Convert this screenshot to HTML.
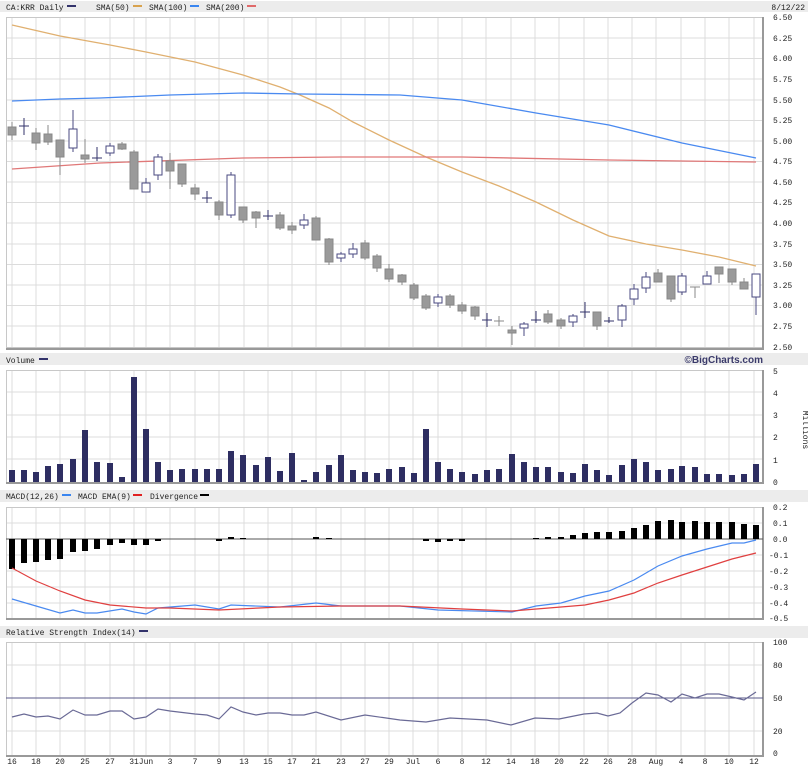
<!DOCTYPE html><html><head><meta charset="utf-8"><style>
body{margin:0;background:#fff;}
svg{display:block;font-family:"Liberation Mono","DejaVu Sans Mono",monospace;font-size:8px;fill:#222;}
</style></head><body>
<svg width="808" height="767" viewBox="0 0 808 767" xmlns="http://www.w3.org/2000/svg">
<rect x="0" y="1" width="808" height="11" fill="#ececec"/>
<text x="6" y="10">CA:KRR Daily</text><rect x="67" y="5" width="9" height="2" fill="#33336b"/>
<text x="96" y="10">SMA(50)</text><rect x="133" y="5" width="9" height="2" fill="#d8a24e"/>
<text x="149" y="10">SMA(100)</text><rect x="190" y="5" width="9" height="2" fill="#3a86f0"/>
<text x="206" y="10">SMA(200)</text><rect x="247" y="5" width="9" height="2" fill="#e06a6a"/>
<text x="805" y="10" text-anchor="end">8/12/22</text>

<rect x="0" y="353" width="808" height="12" fill="#ececec"/>
<text x="6" y="363">Volume</text><rect x="39" y="358" width="9" height="2" fill="#33336b"/>
<text x="763" y="363" text-anchor="end" font-family="Liberation Sans,sans-serif" font-weight="bold" font-size="10" fill="#3a3a6a">©BigCharts.com</text>

<rect x="0" y="490" width="808" height="12" fill="#ececec"/>
<text x="6" y="499">MACD(12,26)</text><rect x="62" y="494" width="9" height="2" fill="#3a86f0"/>
<text x="78" y="499">MACD EMA(9)</text><rect x="133" y="494" width="9" height="2" fill="#e02020"/>
<text x="150" y="499">Divergence</text><rect x="200" y="494" width="9" height="2" fill="#000"/>

<rect x="0" y="626" width="808" height="12" fill="#ececec"/>
<text x="6" y="635">Relative Strength Index(14)</text><rect x="139" y="630" width="9" height="2" fill="#33336b"/>

<g stroke="#dcdcdc" stroke-width="1" fill="none">
<path d="M12 17V348M36 17V348M60 17V348M85 17V348M110 17V348M134 17V348M146 17V348M170 17V348M195 17V348M219 17V348M244 17V348M268 17V348M292 17V348M316 17V348M341 17V348M365 17V348M389 17V348M413 17V348M438 17V348M462 17V348M486 17V348M511 17V348M535 17V348M559 17V348M584 17V348M608 17V348M632 17V348M656 17V348M681 17V348M705 17V348M729 17V348M754 17V348"/>
<path d="M12 370V482M36 370V482M60 370V482M85 370V482M110 370V482M134 370V482M146 370V482M170 370V482M195 370V482M219 370V482M244 370V482M268 370V482M292 370V482M316 370V482M341 370V482M365 370V482M389 370V482M413 370V482M438 370V482M462 370V482M486 370V482M511 370V482M535 370V482M559 370V482M584 370V482M608 370V482M632 370V482M656 370V482M681 370V482M705 370V482M729 370V482M754 370V482"/>
<path d="M12 507V618M36 507V618M60 507V618M85 507V618M110 507V618M134 507V618M146 507V618M170 507V618M195 507V618M219 507V618M244 507V618M268 507V618M292 507V618M316 507V618M341 507V618M365 507V618M389 507V618M413 507V618M438 507V618M462 507V618M486 507V618M511 507V618M535 507V618M559 507V618M584 507V618M608 507V618M632 507V618M656 507V618M681 507V618M705 507V618M729 507V618M754 507V618"/>
<path d="M12 642V755M36 642V755M60 642V755M85 642V755M110 642V755M134 642V755M146 642V755M170 642V755M195 642V755M219 642V755M244 642V755M268 642V755M292 642V755M316 642V755M341 642V755M365 642V755M389 642V755M413 642V755M438 642V755M462 642V755M486 642V755M511 642V755M535 642V755M559 642V755M584 642V755M608 642V755M632 642V755M656 642V755M681 642V755M705 642V755M729 642V755M754 642V755"/>
<path d="M6 38H763M6 58.5H763M6 79H763M6 100H763M6 120.5H763M6 141H763M6 161.5H763M6 182H763M6 202.5H763M6 223H763M6 244H763M6 264.5H763M6 285H763M6 305.5H763M6 326H763"/>
<path d="M6 392H763M6 415H763M6 437H763M6 459H763"/>
<path d="M6 523H763M6 555H763M6 571H763M6 587H763M6 603H763"/>
<path d="M6 665H763M6 731H763"/>
</g>
<g fill="none" stroke="#c8c8c8"><rect x="6.5" y="17.5" width="756" height="330"/><rect x="6.5" y="370.5" width="756" height="112"/><rect x="6.5" y="507.5" width="756" height="111"/><rect x="6.5" y="642.5" width="756" height="113"/></g>
<g stroke="#999" stroke-width="2" fill="none"><path d="M763 17V349H6M763 370V483H6M763 507V619H6M763 642V756H6"/></g>

<g><text x="773" y="20">6.50</text><text x="773" y="41">6.25</text><text x="773" y="61">6.00</text><text x="773" y="82">5.75</text><text x="773" y="103">5.50</text><text x="773" y="123">5.25</text><text x="773" y="144">5.00</text><text x="773" y="164">4.75</text><text x="773" y="185">4.50</text><text x="773" y="205">4.25</text><text x="773" y="226">4.00</text><text x="773" y="247">3.75</text><text x="773" y="267">3.50</text><text x="773" y="288">3.25</text><text x="773" y="308">3.00</text><text x="773" y="329">2.75</text><text x="773" y="350">2.50</text>
<text x="773" y="374">5</text><text x="773" y="396">4</text><text x="773" y="418">3</text><text x="773" y="440">2</text><text x="773" y="463">1</text><text x="773" y="485">0</text>
<text transform="translate(803,430) rotate(90)" text-anchor="middle">Millions</text>
<text x="773" y="510">0.2</text><text x="773" y="526">0.1</text><text x="773" y="542">0.0</text><text x="769" y="558">-0.1</text><text x="769" y="574">-0.2</text><text x="769" y="590">-0.3</text><text x="769" y="606">-0.4</text><text x="769" y="621">-0.5</text>
<text x="773" y="645">100</text><text x="773" y="668">80</text><text x="773" y="701">50</text><text x="773" y="734">20</text><text x="773" y="756">0</text>
</g>
<g text-anchor="middle"><text x="12" y="764">16</text><text x="36" y="764">18</text><text x="60" y="764">20</text><text x="85" y="764">25</text><text x="110" y="764">27</text><text x="134" y="764">31</text><text x="146" y="764">Jun</text><text x="170" y="764">3</text><text x="195" y="764">7</text><text x="219" y="764">9</text><text x="244" y="764">13</text><text x="268" y="764">15</text><text x="292" y="764">17</text><text x="316" y="764">21</text><text x="341" y="764">23</text><text x="365" y="764">27</text><text x="389" y="764">29</text><text x="413" y="764">Jul</text><text x="438" y="764">6</text><text x="462" y="764">8</text><text x="486" y="764">12</text><text x="511" y="764">14</text><text x="535" y="764">18</text><text x="559" y="764">20</text><text x="584" y="764">22</text><text x="608" y="764">26</text><text x="632" y="764">28</text><text x="656" y="764">Aug</text><text x="681" y="764">4</text><text x="705" y="764">8</text><text x="729" y="764">10</text><text x="754" y="764">12</text></g>

<g fill="none" stroke-width="1.3">
<polyline stroke="#e0b070" points="12,25 60,36 110,45 146,52 195,62 243,75 280,87 300,95 329,108 353,122 389,140 426,157 462,172 499,186 536,202 573,220 609,236 646,244 682,250 719,257 756,266"/>
<polyline stroke="#4a8af0" points="12,101 60,99 100,98 170,95 243,93 300,94 400,95 462,100 536,113 609,125 682,143 756,158"/>
<polyline stroke="#e07878" points="12,169 100,163 243,158 340,157 462,157 609,160 756,162"/>
</g>

<g stroke="#888" fill="#9a9a9a">
<path d="M12 122V140M36 128V150M48 125V145M60 140V175M85 139V163M122 142V150M134 150V189M170 153V189M182 164V187M195 184V200M219 200V220M243 207V223M256 211V228M280 212V230M292 222V234M316 216V240M329 238V265M365 240V260M377 254V272M389 264V282M402 274V285M414 283V300M426 294V310M450 294V308M462 302V314M475 306V320M512 326V345M548 310V324M561 318V329M597 312V330M658 269V282M671 276V302M719 267V283M732 269V285M744 278V289"/>
<rect x="8" y="127" width="8" height="8"/><rect x="32" y="133" width="8" height="10"/><rect x="44" y="134" width="8" height="8"/><rect x="56" y="140" width="8" height="17"/><rect x="81" y="155" width="8" height="4"/><rect x="118" y="144" width="8" height="5"/><rect x="130" y="152" width="8" height="37"/><rect x="166" y="161" width="8" height="10"/><rect x="178" y="164" width="8" height="20"/><rect x="191" y="188" width="8" height="6"/><rect x="215" y="202" width="8" height="13"/><rect x="239" y="207" width="8" height="13"/><rect x="252" y="212" width="8" height="6"/><rect x="276" y="215" width="8" height="13"/><rect x="288" y="226" width="8" height="4"/><rect x="312" y="218" width="8" height="22"/><rect x="325" y="239" width="8" height="23"/><rect x="361" y="243" width="8" height="15"/><rect x="373" y="256" width="8" height="12"/><rect x="385" y="269" width="8" height="10"/><rect x="398" y="275" width="8" height="7"/><rect x="410" y="285" width="8" height="13"/><rect x="422" y="296" width="8" height="12"/><rect x="446" y="296" width="8" height="9"/><rect x="458" y="305" width="8" height="6"/><rect x="471" y="307" width="8" height="9"/><rect x="508" y="330" width="8" height="3"/><rect x="544" y="314" width="8" height="8"/><rect x="557" y="320" width="8" height="6"/><rect x="593" y="312" width="8" height="14"/><rect x="654" y="273" width="8" height="9"/><rect x="667" y="276" width="8" height="23"/><rect x="715" y="267" width="8" height="7"/><rect x="728" y="269" width="8" height="13"/><rect x="740" y="282" width="8" height="7"/>
</g>
<g stroke="#4a4a80" fill="#fff">
<path d="M73 110V152M110 143V156M146 178V192M158 154V180M231 172V218M304 214V229M341 252V262M353 243V258M438 294V307M524 322V336M573 314V327M622 304V327M634 284V305M646 272V293M682 273V295M707 271V284M756 274V315"/>
<rect x="69" y="129" width="8" height="19"/><rect x="106" y="146" width="8" height="7"/><rect x="142" y="183" width="8" height="9"/><rect x="154" y="157" width="8" height="18"/><rect x="227" y="175" width="8" height="40"/><rect x="300" y="220" width="8" height="5"/><rect x="337" y="254" width="8" height="4"/><rect x="349" y="249" width="8" height="5"/><rect x="434" y="297" width="8" height="6"/><rect x="520" y="324" width="8" height="4"/><rect x="569" y="316" width="8" height="6"/><rect x="618" y="306" width="8" height="14"/><rect x="630" y="289" width="8" height="10"/><rect x="642" y="277" width="8" height="11"/><rect x="678" y="276" width="8" height="16"/><rect x="703" y="276" width="8" height="8"/><rect x="752" y="274" width="8" height="23"/>
</g>
<g stroke="#33336b" fill="none">
<path d="M24 118V135M19 126H29M97 147V161M92 158H102M207 191V203M202 198H212M268 210V220M263 216H273M487 313V327M482 320H492M536 311V323M531 320H541M585 302V318M580 312H590M609 317V323M604 321H614"/>
</g>
<g stroke="#888" fill="none"><path d="M499 316V326M494 321H504M695 287V298M690 287H700"/></g>

<g fill="#2e2e62">
<rect x="9" y="470" width="6" height="12"/><rect x="21" y="470" width="6" height="12"/><rect x="33" y="472" width="6" height="10"/><rect x="45" y="466" width="6" height="16"/><rect x="57" y="464" width="6" height="18"/><rect x="70" y="459" width="6" height="23"/><rect x="82" y="430" width="6" height="52"/><rect x="94" y="462" width="6" height="20"/><rect x="107" y="463" width="6" height="19"/><rect x="119" y="477" width="6" height="5"/><rect x="131" y="377" width="6" height="105"/><rect x="143" y="429" width="6" height="53"/><rect x="155" y="462" width="6" height="20"/><rect x="167" y="470" width="6" height="12"/><rect x="179" y="469" width="6" height="13"/><rect x="192" y="469" width="6" height="13"/><rect x="204" y="469" width="6" height="13"/><rect x="216" y="469" width="6" height="13"/><rect x="228" y="451" width="6" height="31"/><rect x="240" y="455" width="6" height="27"/><rect x="253" y="465" width="6" height="17"/><rect x="265" y="457" width="6" height="25"/><rect x="277" y="471" width="6" height="11"/><rect x="289" y="453" width="6" height="29"/><rect x="301" y="480" width="6" height="2"/><rect x="313" y="472" width="6" height="10"/><rect x="326" y="465" width="6" height="17"/><rect x="338" y="455" width="6" height="27"/><rect x="350" y="470" width="6" height="12"/><rect x="362" y="472" width="6" height="10"/><rect x="374" y="473" width="6" height="9"/><rect x="386" y="469" width="6" height="13"/><rect x="399" y="467" width="6" height="15"/><rect x="411" y="473" width="6" height="9"/><rect x="423" y="429" width="6" height="53"/><rect x="435" y="462" width="6" height="20"/><rect x="447" y="469" width="6" height="13"/><rect x="459" y="472" width="6" height="10"/><rect x="472" y="474" width="6" height="8"/><rect x="484" y="470" width="6" height="12"/><rect x="496" y="469" width="6" height="13"/><rect x="509" y="454" width="6" height="28"/><rect x="521" y="462" width="6" height="20"/><rect x="533" y="467" width="6" height="15"/><rect x="545" y="467" width="6" height="15"/><rect x="558" y="472" width="6" height="10"/><rect x="570" y="473" width="6" height="9"/><rect x="582" y="464" width="6" height="18"/><rect x="594" y="470" width="6" height="12"/><rect x="606" y="475" width="6" height="7"/><rect x="619" y="465" width="6" height="17"/><rect x="631" y="459" width="6" height="23"/><rect x="643" y="462" width="6" height="20"/><rect x="655" y="470" width="6" height="12"/><rect x="668" y="469" width="6" height="13"/><rect x="679" y="466" width="6" height="16"/><rect x="692" y="467" width="6" height="15"/><rect x="704" y="474" width="6" height="8"/><rect x="716" y="474" width="6" height="8"/><rect x="729" y="475" width="6" height="7"/><rect x="741" y="474" width="6" height="8"/><rect x="753" y="464" width="6" height="18"/>
</g>

<path d="M6 539H763" stroke="#555" stroke-width="1" fill="none"/>
<g fill="#000">
<rect x="9" y="539" width="6" height="30"/><rect x="21" y="539" width="6" height="24"/><rect x="33" y="539" width="6" height="23"/><rect x="45" y="539" width="6" height="21"/><rect x="57" y="539" width="6" height="20"/><rect x="70" y="539" width="6" height="13"/><rect x="82" y="539" width="6" height="12"/><rect x="94" y="539" width="6" height="10"/><rect x="107" y="539" width="6" height="6"/><rect x="119" y="539" width="6" height="4"/><rect x="131" y="539" width="6" height="6"/><rect x="143" y="539" width="6" height="6"/><rect x="155" y="539" width="6" height="2"/><rect x="216" y="539" width="6" height="2"/><rect x="228" y="537" width="6" height="2"/><rect x="240" y="538" width="6" height="1"/><rect x="313" y="537" width="6" height="2"/><rect x="326" y="538" width="6" height="1"/><rect x="423" y="539" width="6" height="2"/><rect x="435" y="539" width="6" height="3"/><rect x="447" y="539" width="6" height="2"/><rect x="459" y="539" width="6" height="2"/><rect x="533" y="538" width="6" height="1"/><rect x="545" y="537" width="6" height="2"/><rect x="558" y="537" width="6" height="2"/><rect x="570" y="535" width="6" height="4"/><rect x="582" y="533" width="6" height="6"/><rect x="594" y="532" width="6" height="7"/><rect x="606" y="532" width="6" height="7"/><rect x="619" y="531" width="6" height="8"/><rect x="631" y="528" width="6" height="11"/><rect x="643" y="525" width="6" height="14"/><rect x="655" y="521" width="6" height="18"/><rect x="668" y="520" width="6" height="19"/><rect x="679" y="522" width="6" height="17"/><rect x="692" y="521" width="6" height="18"/><rect x="704" y="522" width="6" height="17"/><rect x="716" y="522" width="6" height="17"/><rect x="729" y="522" width="6" height="17"/><rect x="741" y="524" width="6" height="15"/><rect x="753" y="525" width="6" height="14"/>
</g>
<g fill="none" stroke-width="1.2">
<polyline stroke="#4a8af0" points="12,599 36,606 60,613 73,610 85,613 97,613 122,609 134,612 146,614 158,608 195,605 219,609 231,605 280,607 316,603 341,606 400,606 438,610 512,612 536,606 561,603 585,596 609,591 634,580 658,566 682,556 707,549 732,543 744,543 756,540"/>
<polyline stroke="#e04040" points="12,568 36,581 60,591 85,600 110,605 146,608 170,608 219,610 280,607 341,606 400,606 462,609 512,611 561,607 585,605 609,600 634,593 658,583 682,575 707,567 732,559 756,553"/>
</g>

<path d="M6 698H763" stroke="#5a5a8a" stroke-width="1" fill="none"/>
<polyline fill="none" stroke="#6a6a96" stroke-width="1.2" points="12,717 24,714 36,717 48,716 60,719 73,710 85,715 97,715 110,711 122,711 134,719 146,717 158,709 170,711 195,714 207,715 219,719 231,707 243,712 256,715 268,713 280,713 292,715 304,715 316,712 341,720 365,715 400,720 426,722 450,718 487,720 511,725 535,718 559,719 584,714 597,713 608,716 620,713 632,703 646,693 658,695 671,702 682,694 695,698 707,694 719,694 732,697 744,700 756,692"/>
</svg>
</body></html>
